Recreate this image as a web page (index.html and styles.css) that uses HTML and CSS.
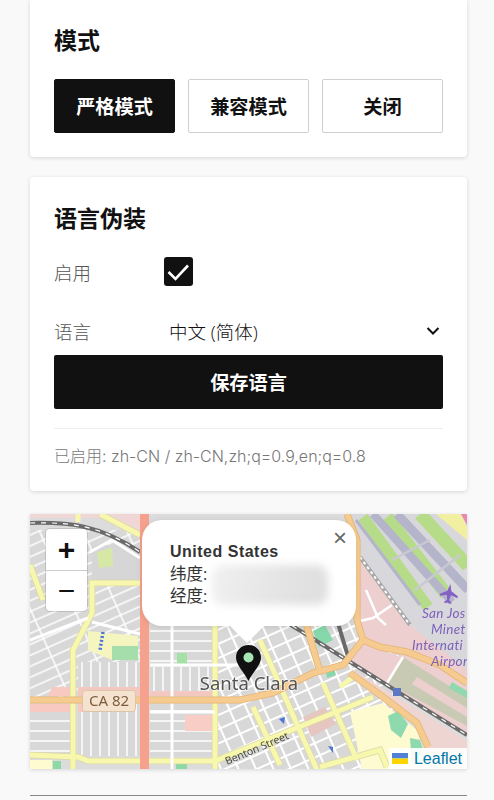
FILE: index.html
```html
<!DOCTYPE html>
<html lang="zh-CN">
<head>
  <meta charset="UTF-8">
  <title>语言伪装</title>
  <link rel="stylesheet" href="styles.css">
</head>
<body>
  <div class="container">
    <div class="card card-top">
      <h2>模式</h2>
      <div class="mode-group">
        <button class="mode-btn active">严格模式</button>
        <button class="mode-btn">兼容模式</button>
        <button class="mode-btn">关闭</button>
      </div>
    </div>

    <div class="card">
      <h2>语言伪装</h2>
      <div class="form-row">
        <span class="form-label">启用</span>
        <span class="checkbox">
          <svg width="29" height="29" viewBox="0 0 29 29"><path d="M4.500 15l7 7L24 8.500" fill="none" stroke="#fff" stroke-width="2.600"/></svg>
        </span>
      </div>
      <div class="form-row select-row">
        <span class="form-label">语言</span>
        <div class="select">
          <span>中文 (简体)</span>
          <svg width="14" height="10" viewBox="0 0 14 10"><path d="M1.500 2l5.500 5.500L12.500 2" fill="none" stroke="#111" stroke-width="2"/></svg>
        </div>
      </div>
      <button class="save-btn">保存语言</button>
      <div class="status">已启用: zh-CN / zh-CN,zh;q=0.9,en;q=0.8</div>
    </div>

    <div class="map">
      <svg class="map-tiles" width="437" height="255" viewBox="30 514 437 255">
        <defs>
          <pattern id="rows" width="40" height="10" patternUnits="userSpaceOnUse">
            <rect width="40" height="10" fill="#d8d8d8"/>
            <path d="M0 1H40" stroke="#fff" stroke-width="1.500"/>
          </pattern>
          <pattern id="slant" width="40" height="10" patternUnits="userSpaceOnUse" patternTransform="rotate(-24)">
            <rect width="40" height="10" fill="#d8d8d8"/>
            <path d="M0 1H40M20 0V10" stroke="#fff" stroke-width="1.500"/>
          </pattern>
          <pattern id="cols" width="9" height="40" patternUnits="userSpaceOnUse">
            <rect width="9" height="40" fill="#d8d8d8"/>
            <path d="M1 0V40" stroke="#fff" stroke-width="1.500"/>
          </pattern>
          <pattern id="grid" width="16" height="13" patternUnits="userSpaceOnUse" patternTransform="rotate(-24)">
            <rect width="16" height="13" fill="#d8d8d8"/>
            <path d="M0 1H16M1 0V13" stroke="#fff" stroke-width="2.200"/>
          </pattern>
        </defs>

        <rect x="30" y="514" width="437" height="255" fill="#dcdcdc"/>

        <!-- street blocks -->
        <rect x="30" y="530" width="110" height="170" fill="url(#slant)"/>
        <rect x="92" y="545" width="48" height="38" fill="#d6d6d6"/>
        <rect x="78" y="662" width="62" height="34" fill="url(#cols)"/>
        <rect x="150" y="620" width="65" height="44" fill="url(#rows)"/>
        <rect x="150" y="667" width="65" height="29" fill="url(#cols)"/>
        <rect x="30" y="704" width="44" height="52" fill="url(#rows)"/>
        <rect x="78" y="704" width="62" height="52" fill="url(#cols)"/>
        <rect x="150" y="704" width="65" height="52" fill="url(#rows)"/>
        <rect x="218" y="620" width="180" height="149" fill="url(#grid)"/>

        <!-- land use -->
        <path d="M30 514H140V533L100 518H30Z" fill="#f0d6d4"/>
        <path d="M30 696H48L52 687H72V696H30ZM30 704H70V712H30ZM78 704H90V712H78Z" fill="#f8c9c0"/>
        <path d="M78 687H140V696H78ZM150 691H215V696H150Z" fill="#f3c8c0"/>
        <path d="M185 715H212V731H185Z" fill="#f8cdc6"/>
        <path d="M303 717L325 707L336 724L311 737Z" fill="#e6c6c0"/>
        <path d="M97 552L112 548L113 566L99 568Z" fill="#d6e8a5"/>
        <path d="M88 631L138 636V660H112L88 650Z" fill="#f5f5c0"/>
        <path d="M112 646H138V660H112Z" fill="#a5deaa"/>
        <path d="M177 653H187V664H177Z" fill="#a5e0a5"/>
        <path d="M30 760H52V769H30Z" fill="#fdfbcf"/>
        <path d="M53 761H61V769H53ZM176 764H187V769H176Z" fill="#8cd9a5"/>
        <path d="M313 631L325 625L333 640L319 647Z" fill="#86d8aa"/>
        <path d="M326 672L334 668L336 675L327 678Z" fill="#86d8aa"/>

        <!-- airport -->
        <path d="M350 514H467V690L360 560Z" fill="#d8d8dc"/>
        <path d="M358 555L410 625L467 670V690L380 646L363 640L358 620Z" fill="#eccfce"/>
        <g fill="none" stroke-linecap="butt">
          <path d="M363 517L428 607" stroke="#b6dc8a" stroke-width="11"/>
          <path d="M387 517L446 594" stroke="#b6dc8a" stroke-width="13"/>
          <path d="M420 514L468 566" stroke="#b6dc8a" stroke-width="13"/>
          <path d="M373 514L452 602" stroke="#b4b4ca" stroke-width="8"/>
          <path d="M397 514L468 590" stroke="#b4b4ca" stroke-width="9"/>
          <path d="M356 520L420 605" stroke="#b4b4ca" stroke-width="3"/>
          <path d="M392 560L430 540M415 590L460 555" stroke="#c9c9d2" stroke-width="2.500"/>
          <path d="M360 557L410 625" stroke="#a8a8a8" stroke-width="4"/>
          <path d="M360 557L410 625" stroke="#fff" stroke-width="2" stroke-dasharray="3 3"/>
        </g>
        <path d="M436 514H461L467 527V540Z" fill="#f2f0a0"/>
        <path d="M461 514H467V525Z" fill="#e78ab0"/>
        <path d="M360 621L373 618L392 605M366 590L378 618L386 625" fill="none" stroke="#fff" stroke-width="2.500"/>

        <!-- right of the railway -->
        <path d="M363 642L467 685V735L345 660Z" fill="#eccfce"/>
        <path d="M387 683L403 657L467 697V726Z" fill="#c9cab4"/>
        <path d="M417 677L467 708V717L412 684Z" fill="#eccfce"/>
        <path d="M452 682L467 691V698L449 688Z" fill="#8ed9ae"/>
        <path d="M403 657L387 683" stroke="#fff" stroke-width="2.500"/>
        <path d="M350 668L467 741V769H430L417 723L383 697Z" fill="#eed5d2"/>
        <path d="M350 712L383 703L417 730L428 769H362Z" fill="#fdfbcf"/>
        <path d="M388 716L398 711L408 724L401 738L391 730Z" fill="#8ed9ae"/>
        <path d="M410 738L420 740L426 760L412 764Z" fill="#8ed9ae"/>

        <!-- yellow roads -->
        <g fill="none" stroke="#dcd8a5" stroke-width="6.500">
          <path d="M73 769V650L92 613V583H140"/>
          <path d="M100 514L140 535"/>
          <path d="M30 565L43 600"/>
          <path d="M30 755L78 757L88 761H215L373 697"/>
          <path d="M215 625V769"/>
          <path d="M260 640L317 770"/>
          <path d="M323 683L357 760"/>
          <path d="M253 707L280 765"/>
          <path d="M320 767L380 750L387 767"/>
        </g>
        <g fill="none" stroke="#f7f7ae" stroke-width="5">
          <path d="M73 769V650L92 613V583H140"/>
          <path d="M100 514L140 535"/>
          <path d="M30 565L43 600"/>
          <path d="M78 514V522"/>
          <path d="M30 755L78 757L88 761H215L373 697"/>
          <path d="M215 625V769"/>
          <path d="M260 640L317 770"/>
          <path d="M323 683L357 760"/>
          <path d="M253 707L280 765"/>
          <path d="M320 767L380 750L387 767"/>
          <path d="M340 687L353 677"/>
        </g>

        <!-- white roads -->
        <g fill="none" stroke="#fff" stroke-width="3">
          <path d="M30 640L88 618"/>
          <path d="M92 622L140 634"/>
          <path d="M90 552L112 540L140 558"/>
          <path d="M172 625V769"/>
          <path d="M150 665H240"/>
          <path d="M150 712H215"/>
        </g>

        <!-- railway -->
        <g fill="none" stroke="#6a6a6a" stroke-width="4">
          <path d="M30 523C70 522 100 525 140 552"/>
          <path d="M283 620L467 735"/>
          <path d="M337 620L350 663"/>
        </g>
        <g fill="none" stroke="#fff" stroke-width="1.200" stroke-dasharray="5 6">
          <path d="M30 523C70 522 100 525 140 552"/>
          <path d="M283 620L467 735"/>
        </g>

        <!-- orange trunk roads -->
        <g fill="none" stroke="#e5b373" stroke-width="7">
          <path d="M30 700H240L273 693L313 673L343 665L363 640L357 620V540L347 514"/>
          <path d="M363 640L380 647L407 652L440 665L467 683"/>
          <path d="M350 673L383 697L417 723L428 747"/>
          <path d="M305 620L320 672"/>
        </g>
        <g fill="none" stroke="#f6cb8f" stroke-width="5.500">
          <path d="M30 700H240L273 693L313 673L343 665L363 640L357 620V540L347 514"/>
          <path d="M363 640L380 647L407 652L440 665L467 683"/>
          <path d="M350 673L383 697L417 723L428 747"/>
          <path d="M305 620L320 672"/>
        </g>
        <path d="M144.500 514V769" fill="none" stroke="#f6a18d" stroke-width="9"/>

        <!-- water and small marks -->
        <path d="M103 632L100 650" fill="none" stroke="#4d74d6" stroke-width="3.500" stroke-dasharray="2 2"/>
        <path d="M279 719l6 -2l-1 7ZM328 746l5 1l0 6Z" fill="#4d74d6"/>
        <rect x="393" y="688" width="8" height="8" fill="#5c78c4"/>

        <!-- airplane -->
        <path d="M449 584l2 7l7 4v2l-7 -2l-1 5l2.500 2v1.500l-3.500 -1l-3.500 1v-1.500l2.500 -2l-1 -5l-7 2v-2l7 -4Z" fill="#8461c4" transform="rotate(8 449 594)"/>
        <g class="map-label-air">
          <text x="422" y="618">San Jos</text>
          <text x="431" y="634">Minet</text>
          <text x="412" y="650">Internati</text>
          <text x="431" y="666">Airpor</text>
        </g>
        <rect x="82.500" y="690.500" width="53" height="21" rx="3" fill="#f6e3cf" stroke="#dcc4a6"/>
        <text class="map-label-shield" x="109" y="706" text-anchor="middle">CA 82</text>
        <text class="map-label-city" x="249" y="690" text-anchor="middle">Santa Clara</text>
        <text class="map-label-street" transform="translate(227 765) rotate(-23)">Benton Street</text>
      </svg>

      <div class="zoom-control">
        <span class="zoom-btn zoom-in">+</span>
        <span class="zoom-btn">−</span>
      </div>

      <svg class="marker" width="25" height="36" viewBox="0 0 25 36">
        <path d="M12.500 0C5 0 0 5.500 0 12.500C0 20 8 27 12.500 36C17 27 25 20 25 12.500C25 5.500 20 0 12.500 0Z" fill="#111"/>
        <circle cx="12.500" cy="12.500" r="5" fill="#a6e6b4"/>
      </svg>

      <div class="popup">
        <span class="popup-close">×</span>
        <div class="popup-title">United States</div>
        <div>纬度:</div>
        <div>经度:</div>
        <div class="popup-blur"></div>
        <span class="popup-tip"></span>
      </div>

      <div class="attribution">
        <svg width="16" height="11" viewBox="0 0 16 11"><rect width="16" height="5.500" fill="#4f80d8"/><rect y="5.500" width="16" height="5.500" fill="#ffd500"/></svg>
        <span>Leaflet</span>
      </div>
    </div>

    <div class="footer-line"></div>
  </div>
</body>
</html>
```

FILE: styles.css
```css
* {
  margin: 0;
  padding: 0;
  box-sizing: border-box;
}

body {
  font-family: "Open Sans", "Noto Sans CJK SC", sans-serif;
  background: #f9f9f9;
  color: #111;
  overflow: hidden;
  height: 800px;
}

.container {
  padding: 0 27px 0 30px;
  display: flex;
  flex-direction: column;
}

.card {
  background: #fff;
  border-radius: 4px;
  box-shadow: 0 1px 4px rgba(0,0,0,0.14);
  padding: 26px 24px 25px;
  margin-bottom: 20px;
}

.card-top {
  border-radius: 0 0 4px 4px;
  padding-top: 25px;
  height: 157px;
}

.card h2 {
  font-size: 23px;
  line-height: 30px;
  font-weight: 700;
}

.mode-group {
  display: grid;
  grid-template-columns: repeat(3, 1fr);
  gap: 13px;
  margin-top: 24px;
}

.mode-btn {
  height: 54px;
  background: #fff;
  border: 1px solid #cfcfcf;
  border-radius: 2px;
  color: #111;
  font-family: inherit;
  font-size: 19.200px;
  font-weight: 700;
}

.mode-btn.active {
  background: #111;
  border-color: #111;
  color: #fff;
}

.form-row {
  display: flex;
  align-items: center;
  margin-top: 24px;
}

.select-row {
  margin-top: 21px;
  height: 48px;
}

.form-label {
  width: 110px;
  font-size: 18.500px;
  font-weight: 300;
  color: #555;
}

.checkbox {
  width: 29px;
  height: 29px;
  background: #111;
  border-radius: 3px;
}

.checkbox svg {
  display: block;
}

.select {
  flex: 1;
  display: flex;
  align-items: center;
  justify-content: space-between;
  padding: 0 3px 0 5px;
  font-size: 18.500px;
  font-weight: 300;
}

.save-btn {
  display: block;
  width: 100%;
  height: 54px;
  background: #111;
  border: none;
  border-radius: 2px;
  color: #fff;
  font-family: inherit;
  font-size: 19.200px;
  font-weight: 700;
}

.status {
  margin-top: 19px;
  padding-top: 17px;
  border-top: 1px solid #eee;
  font-family: "Inter", "Noto Sans CJK SC", sans-serif;
  font-size: 16px;
  font-weight: 300;
  line-height: 20px;
  white-space: nowrap;
  color: #777;
}

.map {
  position: relative;
  height: 255px;
  margin-top: 3px;
  overflow: hidden;
  background: #dcdcdc;
  box-shadow: 0 1px 4px rgba(0,0,0,0.14);
}

.map-tiles {
  display: block;
  filter: blur(0.7px);
}

.map-label-air {
  font: italic 13.500px "Lato", sans-serif;
  letter-spacing: 0.3px;
  fill: #7c62b8;
}

.map-label-shield {
  font: 15px "Noto Sans", sans-serif;
  fill: #7a5e3e;
}

.map-label-city {
  font: 18.500px "Noto Sans", sans-serif;
  fill: #555;
  stroke: rgba(255,255,255,0.6);
  stroke-width: 2px;
  paint-order: stroke;
}

.map-label-street {
  font: 10.500px "Noto Sans", sans-serif;
  fill: #4a4a3a;
}

.zoom-control {
  position: absolute;
  left: 16px;
  top: 15px;
  width: 41px;
  background: #fff;
  border-radius: 4px;
  box-shadow: 0 0 0 1px rgba(0,0,0,0.12);
}

.zoom-btn {
  display: flex;
  align-items: center;
  justify-content: center;
  height: 41px;
  font-family: "Liberation Sans", sans-serif;
  font-size: 30px;
  color: #111;
}

.zoom-in {
  font-weight: 700;
}

.zoom-btn + .zoom-btn {
  border-top: 1px solid #ccc;
}

.marker {
  position: absolute;
  left: 206px;
  top: 131px;
}

.popup {
  position: absolute;
  left: 112px;
  top: 6px;
  width: 214px;
  height: 106px;
  padding: 20px 28px;
  background: #fff;
  border-radius: 20px;
  box-shadow: 0 1px 6px rgba(0,0,0,0.1);
  font-size: 16.500px;
  line-height: 22px;
  color: #333;
}

.popup-title {
  font-family: "Liberation Sans", sans-serif;
  font-size: 16px;
  font-weight: 700;
  line-height: 23px;
  letter-spacing: 0.5px;
}

.popup-close {
  position: absolute;
  top: 6px;
  right: 9px;
  font-family: "Liberation Sans", sans-serif;
  font-size: 24px;
  line-height: 24px;
  color: #666;
}

.popup-blur {
  position: absolute;
  left: 70px;
  top: 45px;
  width: 116px;
  height: 40px;
  background: linear-gradient(100deg, #f0f0f0, #e4e4e4 60%, #dedede);
  border-radius: 12px;
  filter: blur(4px);
}

.popup-tip {
  position: absolute;
  left: 93px;
  bottom: -12px;
  width: 24px;
  height: 24px;
  background: #fff;
  transform: rotate(45deg);
}

.attribution {
  position: absolute;
  right: 0;
  bottom: 0;
  display: flex;
  align-items: center;
  gap: 6px;
  height: 21px;
  padding: 0 5px 0 3px;
  background: rgba(255,255,255,0.9);
  font-family: "Liberation Sans", sans-serif;
  font-size: 16px;
  color: #0078a8;
}

.footer-line {
  margin-top: 26px;
  border-top: 1px solid #888;
}
```
